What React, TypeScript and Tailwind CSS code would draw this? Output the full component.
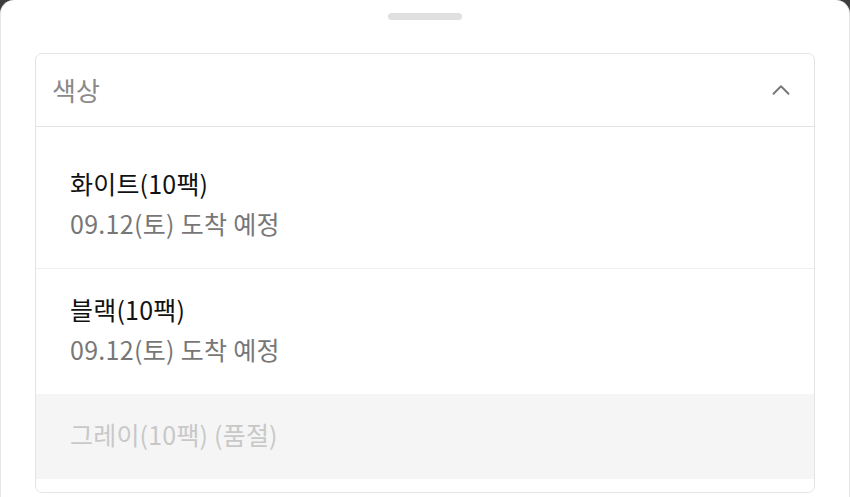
import { ChevronUp } from 'lucide-react';

const options = [
  { name: '화이트(10팩)', eta: '09.12(토) 도착 예정', soldOut: false },
  { name: '블랙(10팩)', eta: '09.12(토) 도착 예정', soldOut: false },
  { name: '그레이(10팩) (품절)', eta: '', soldOut: true },
];

export default function App() {
  return (
    <div className="h-[497px] w-[850px] overflow-hidden bg-[#3c3c3c]" style={{ fontFamily: '"Noto Sans CJK KR", "Noto Sans", sans-serif' }}>
      <div className="flex h-full flex-col rounded-t-[14px] border-x border-[#e6e6e6] bg-white px-[34px]">
        <div className="flex justify-center pt-[13px]">
          <div className="h-[7px] w-[74px] rounded-full bg-[#e0e0e0]" />
        </div>

        <div className="mt-[33px] overflow-hidden rounded-[7px] border border-[#e4e4e4]">
          <div className="flex h-[73px] items-center justify-between border-b border-[#e4e4e4] pl-[16px] pr-[18px]">
            <span className="text-[26px] leading-none text-[#8a8a8a]">색상</span>
            <ChevronUp className="h-[30px] w-[30px] text-[#777]" strokeWidth={1.5} />
          </div>

          <ul className="pb-[13px] pt-[16px]">
            {options.map((o, i) => (
              <li
                key={o.name}
                className={`px-[34px] pb-[28px] pt-[23px] ${i < options.length - 1 && !options[i + 1].soldOut ? 'border-b border-[#efefef]' : ''} ${o.soldOut ? 'bg-[#f5f5f5]' : ''}`}
              >
                <div className={`text-[25px] leading-[34px] tracking-[0.2px] ${o.soldOut ? 'text-[#c8c8c8]' : 'text-[#111]'}`}>{o.name}</div>
                {o.eta && <div className="mt-[6px] text-[25px] leading-[34px] tracking-[0.3px] text-[#777]">{o.eta}</div>}
              </li>
            ))}
          </ul>
        </div>
      </div>
    </div>
  );
}
